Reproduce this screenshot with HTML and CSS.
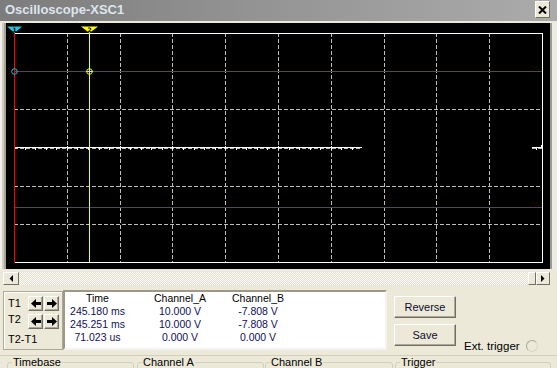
FILE: index.html
```html
<!DOCTYPE html>
<html lang="en">
<head>
    <meta charset="UTF-8">
    <title>Oscilloscope-XSC1</title>
    <link rel="stylesheet" href="styles.css">
</head>
<body>
    <div class="window">
        <div class="titlebar">
            <span class="title">Oscilloscope-XSC1</span>
            <button class="close" type="button">
                <svg width="9" height="8" viewBox="0 0 9 8"><path d="M1 0.5 L8 7.5 M8 0.5 L1 7.5" stroke="#000" stroke-width="2"/></svg>
            </button>
        </div>

        <div class="scope">
            <div class="bezel-left"></div>
            <svg class="screen" width="544" height="246" viewBox="6 23 544 246">
                <rect x="6" y="23" width="544" height="246" fill="#000"/>
                <!-- grid -->
                <path d="M67.5 33V262 M120.5 33V262 M172.5 33V262 M225.5 33V262 M278.5 33V262 M331.5 33V262 M384.5 33V262 M436.5 33V262 M489.5 33V262"
                      stroke="#bdbdbd" stroke-dasharray="4 2" fill="none"/>
                <path d="M14 109.5H542 M14 186.5H542 M14 224.5H542 M14 148.5H362 M532 148.5H542"
                      stroke="#bdbdbd" stroke-dasharray="4 2" fill="none"/>
                <!-- minor ticks on the centre axis -->
                <path d="M25.5 148v2 M35.5 148v2 M46.5 148v2 M56.5 148v2 M67.5 146v4 M77.5 148v2 M88.5 148v2 M99.5 148v2 M109.5 148v2 M120.5 146v4 M130.5 148v2 M141.5 148v2 M151.5 148v2 M162.5 148v2 M172.5 146v4 M183.5 148v2 M194.5 148v2 M204.5 148v2 M215.5 148v2 M225.5 146v4 M236.5 148v2 M246.5 148v2 M257.5 148v2 M267.5 148v2 M278.5 146v4 M289.5 148v2 M299.5 148v2 M310.5 148v2 M320.5 148v2 M331.5 146v4 M341.5 148v2 M352.5 148v2 M536.5 148v2"
                      stroke="#fff" fill="none"/>
                <!-- trace -->
                <path d="M14 147.5H362 M532 147.5H541 M541.5 145v3" stroke="#fff" fill="none"/>
                <!-- frame -->
                <path d="M14 33.5H543 M542.5 33V263 M14 262.5H543" stroke="#fff" fill="none"/>
                <!-- cursors / levels -->
                <path d="M14 71.5H542 M14 207.5H542 M14.5 33V263" stroke="#ff0000" fill="none"/>
                <path d="M89.5 33V262" stroke="#ffff00" fill="none"/>
                <polygon points="7,26.5 22,26.5 14.5,33" fill="#1ec8e4"/>
                <text x="14.5" y="32" class="mark">1</text>
                <polygon points="81,26.5 98,26.5 89.5,33" fill="#ffff00"/>
                <text x="89.5" y="32" class="mark">2</text>
                <circle cx="14.5" cy="71.5" r="2.8" stroke="#1ec8e4" fill="none"/>
                <circle cx="89.5" cy="71.5" r="2.8" stroke="#ffff00" fill="none"/>
                <path d="M86 71.5H93" stroke="#ffff00"/>
            </svg>
            <div class="bezel-right"></div>
        </div>

        <div class="hscroll">
            <span class="sbtn sbtn-left">
                <svg width="4" height="7" viewBox="0 0 4 7"><path d="M4 0V7L0.5 3.5Z" fill="#000"/></svg>
            </span>
            <span class="track"></span>
            <span class="thumb"></span>
            <span class="sbtn sbtn-right">
                <svg width="4" height="7" viewBox="0 0 4 7"><path d="M0 0V7L3.5 3.5Z" fill="#000"/></svg>
            </span>
        </div>

        <div class="controls">
            <div class="cursors">
                <div class="cursor-labels">
                    <span class="lbl-t1">T1</span>
                    <span class="lbl-t2">T2</span>
                    <span class="lbl-diff">T2-T1</span>
                </div>
                <div class="cursor-btns">
                    <div class="btn-row">
                        <button class="arrow" type="button"><svg width="10" height="9" viewBox="0 0 10 9"><path d="M0 4.5L5 0V3H10V6H5V9Z" fill="#000"/></svg></button>
                        <button class="arrow" type="button"><svg width="10" height="9" viewBox="0 0 10 9"><path d="M10 4.5L5 0V3H0V6H5V9Z" fill="#000"/></svg></button>
                    </div>
                    <div class="btn-row">
                        <button class="arrow" type="button"><svg width="10" height="9" viewBox="0 0 10 9"><path d="M0 4.5L5 0V3H10V6H5V9Z" fill="#000"/></svg></button>
                        <button class="arrow" type="button"><svg width="10" height="9" viewBox="0 0 10 9"><path d="M10 4.5L5 0V3H0V6H5V9Z" fill="#000"/></svg></button>
                    </div>
                </div>
            </div>

            <div class="readout">
                <span class="head">Time</span><span class="head">Channel_A</span><span class="head">Channel_B</span>
                <span>245.180 ms</span><span>10.000 V</span><span>-7.808 V</span>
                <span>245.251 ms</span><span>10.000 V</span><span>-7.808 V</span>
                <span>71.023 us</span><span>0.000 V</span><span>0.000 V</span>
            </div>

            <div class="actions">
                <button class="push" type="button">Reverse</button>
                <button class="push" type="button">Save</button>
            </div>

            <div class="ext">
                <span>Ext. trigger</span>
                <span class="radio"></span>
            </div>
        </div>

        <div class="groups">
            <fieldset class="grp grp-time"><legend>Timebase</legend></fieldset>
            <fieldset class="grp grp-a"><legend>Channel A</legend></fieldset>
            <fieldset class="grp grp-b"><legend>Channel B</legend></fieldset>
            <fieldset class="grp grp-trig"><legend>Trigger</legend></fieldset>
        </div>
    </div>
</body>
</html>
```

FILE: styles.css
```css
* {
    margin: 0;
    padding: 0;
    box-sizing: border-box;
}

body {
    width: 557px;
    height: 368px;
    overflow: hidden;
    background: #ece9d8;
    font-family: "Liberation Sans", Arial, sans-serif;
    color: #000;
}

.window {
    height: 368px;
    overflow: hidden;
}

.titlebar {
    height: 21px;
    display: flex;
    align-items: flex-start;
    background: linear-gradient(90deg, #7c7c7c 0%, #939393 45%, #ababab 100%);
}

.title {
    font-family: "Liberation Sans Narrow", "Liberation Sans", Arial, sans-serif;
    font-weight: bold;
    font-size: 13px;
    line-height: 15px;
    color: #dde5ee;
    padding: 2px 0 0 5px;
}

.close {
    margin: 1px 7px 0 auto;
    width: 15px;
    height: 17px;
    background: #ece9d8;
    border: 1px solid;
    border-color: #fff #716f64 #716f64 #fff;
    display: flex;
    align-items: center;
    justify-content: center;
}

/* scope screen */
.scope {
    margin-top: 2px;
    height: 246px;
    display: flex;
}

.bezel-left {
    width: 6px;
    background: linear-gradient(90deg, #f1efe6 0 2px, #cfccc0 2px 4px, #a6a398 4px 6px);
}

.screen {
    display: block;
    width: 544px;
    height: 246px;
}

.bezel-right {
    width: 7px;
    background: linear-gradient(90deg, #9d9b90 0 2px, #ecebe4 2px);
}

.mark {
    font-family: "DejaVu Sans", sans-serif;
    font-size: 6px;
    font-weight: bold;
    text-anchor: middle;
    fill: #000;
}

/* horizontal scrollbar */
.hscroll {
    display: flex;
    height: 13px;
    margin: 3px 7px 0 3px;
}

.sbtn,
.thumb {
    display: flex;
    align-items: center;
    justify-content: center;
    background: #ece9d8;
    border: 1px solid;
    border-color: #fff #716f64 #716f64 #fff;
}

.sbtn-left {
    width: 16px;
}

.sbtn-right {
    width: 14px;
}

.thumb {
    width: 8px;
}

.track {
    flex: 1;
    background: repeating-conic-gradient(#fbfaf6 0 25%, #e2dfd0 0 50%) 0 0 / 2px 2px;
}

/* lower controls */
.controls {
    display: flex;
    align-items: flex-start;
    height: 60px;
    margin-top: 5px;
    padding-left: 3px;
}

.cursors {
    display: flex;
    width: 60px;
    height: 59px;
    margin-top: 1px;
    padding: 4px 0 0 4px;
    border: 1px solid #aca899;
    box-shadow: inset 1px 1px #fff;
}

.cursor-labels {
    width: 20px;
    display: flex;
    flex-direction: column;
    font-size: 11px;
    line-height: 15px;
    white-space: nowrap;
}

.lbl-t2 {
    margin-top: 1px;
}

.lbl-diff {
    margin-top: 5px;
}

.cursor-btns {
    display: flex;
    flex-direction: column;
    gap: 3px;
}

.btn-row {
    display: flex;
    gap: 1px;
}

.arrow {
    width: 15px;
    height: 15px;
    display: flex;
    align-items: center;
    justify-content: center;
    background: #ece9d8;
    border: 1px solid;
    border-color: #fff #716f64 #716f64 #fff;
    box-shadow: inset -1px -1px #aca899;
}

.readout {
    width: 324px;
    height: 60px;
    background: #fff;
    border: 2px solid;
    border-color: #9c998c #f4f3ee #f4f3ee #9c998c;
    display: grid;
    grid-template-columns: 65px 100px 56px;
    grid-auto-rows: 13px;
    font-size: 10.5px;
    line-height: 13px;
    text-align: center;
    white-space: nowrap;
    color: #11115a;
}

.readout .head {
    color: #000;
}

.actions {
    display: flex;
    flex-direction: column;
    gap: 6px;
    margin: 6px 0 0 7px;
}

.push {
    width: 62px;
    height: 22px;
    font-family: "Liberation Sans", Arial, sans-serif;
    font-size: 11px;
    color: #0c0c30;
    background: #ece9d8;
    border: 1px solid;
    border-color: #fff #716f64 #716f64 #fff;
    box-shadow: inset -1px -1px #aca899;
}

.ext {
    display: flex;
    align-items: center;
    gap: 6px;
    margin: 49px 0 0 8px;
    font-size: 11.5px;
    line-height: 14px;
    white-space: nowrap;
}

.radio {
    width: 12px;
    height: 12px;
    border-radius: 50%;
    border: 1px solid;
    border-color: #a9a798 #d8d6ca #d8d6ca #a9a798;
}

/* group boxes, cut by the window edge */
.groups {
    display: flex;
    height: 13px;
    margin-top: 5px;
    border-top: 1px solid #d0d0bf;
}

.grp {
    height: 16px;
    margin-top: 1px;
    padding: 0 0 0 4px;
    border: 1px solid #d0d0bf;
    border-radius: 3px;
}

.grp legend {
    padding: 0 1px;
    font-size: 11px;
    line-height: 10px;
}

.grp-time {
    width: 127px;
    margin-left: 7px;
}

.grp-a {
    width: 127px;
    margin-left: 3px;
}

.grp-b {
    width: 128px;
    margin-left: 1px;
}

.grp-trig {
    width: 156px;
    margin-left: 2px;
}
```
